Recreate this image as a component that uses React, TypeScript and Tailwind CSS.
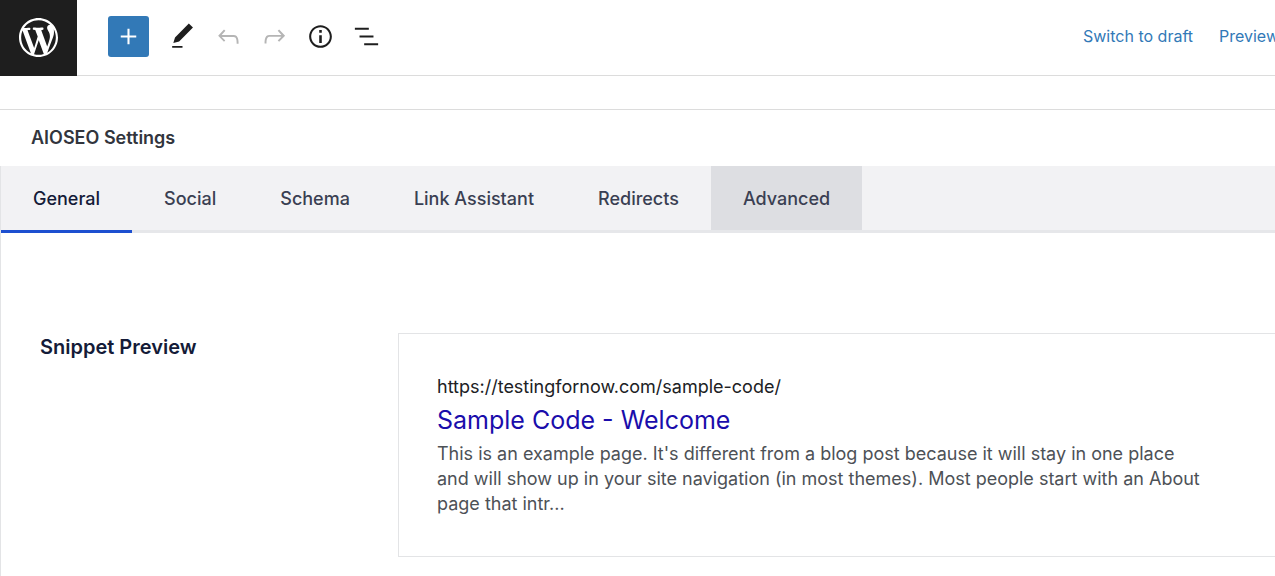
import type { ReactNode } from "react";

const tabs = ["General", "Social", "Schema", "Link Assistant", "Redirects", "Advanced"];

const icons = {
  wordpress:
    "M20 10c0-5.51-4.49-10-10-10C4.48 0 0 4.49 0 10c0 5.52 4.48 10 10 10 5.51 0 10-4.48 10-10zM7.78 15.37L4.37 6.22c.55-.02 1.17-.08 1.17-.08.5-.06.44-1.13-.06-1.11 0 0-1.45.11-2.37.11-.18 0-.37 0-.58-.01C4.12 2.69 6.87 1.11 10 1.11c2.33 0 4.45.87 6.05 2.34-.68-.11-1.65.39-1.65 1.58 0 .74.45 1.36.9 2.1.35.61.55 1.36.55 2.46 0 1.49-1.4 5-1.4 5l-3.03-8.37c.54-.02.82-.17.82-.17.5-.05.44-1.25-.06-1.22 0 0-1.44.12-2.38.12-.87 0-2.33-.12-2.33-.12-.5-.03-.56 1.2-.06 1.22l.92.08 1.26 3.41zM17.41 10c.24-.64.74-1.87.43-4.25.7 1.29 1.05 2.71 1.05 4.25 0 3.29-1.73 6.24-4.4 7.78.97-2.59 1.94-5.2 2.92-7.78zM6.1 18.09C3.12 16.65 1.11 13.53 1.11 10c0-1.3.23-2.48.72-3.59C3.25 10.3 4.67 14.2 6.1 18.09zm4.03-6.63l2.58 6.98c-.86.29-1.76.45-2.71.45-.79 0-1.57-.11-2.29-.33.81-2.38 1.62-4.74 2.42-7.1z",
  plus: "M18 11.2h-5.2V6h-1.6v5.2H6v1.6h5.2V18h1.6v-5.2H18z",
  edit: "M20.1 5.1L16.9 2 6.2 12.7l-1.3 4.4 4.5-1.3L20.1 5.1zM4 20.8h8v-1.5H4v1.5z",
  undo: "M18.3 11.7c-.6-.6-1.4-.9-2.3-.9H6.7l2.9-3.3-1.1-1-4.5 5L8.5 16l1-1-2.7-2.7H16c.5 0 .9.2 1.3.5 1 1 1 3.4 1 4.5v.3h1.5v-.2c0-1.5 0-4.3-1.5-5.7z",
  redo: "M15.6 6.5l-1.1 1 2.9 3.3H8c-.9 0-1.7.3-2.3.9-1.4 1.5-1.4 4.2-1.4 5.6v.2h1.5v-.3c0-1.1 0-3.5 1-4.5.3-.3.7-.5 1.3-.5h9.2L14.5 15l1.1 1.1 4.6-4.6-4.6-5z",
  info: "M12 3.2c-4.8 0-8.8 3.9-8.8 8.8 0 4.8 3.9 8.8 8.8 8.8 4.8 0 8.8-3.9 8.8-8.8 0-4.8-4-8.8-8.8-8.8zm0 16c-4 0-7.2-3.3-7.2-7.2C4.8 8 8 4.8 12 4.8s7.2 3.3 7.2 7.2c0 4-3.2 7.2-7.2 7.2zM11 17h2v-6h-2v6zm0-8h2V7h-2v2z",
  list: "M13.8 5.2H3v1.5h10.8V5.2zm-3.6 12v1.5H21v-1.5H10.2zm7.2-6H6.6v1.5h10.8v-1.5z",
};

function Icon({ path }: { path: string }) {
  return (
    <svg viewBox="0 0 24 24" className="size-[31px] fill-current" aria-hidden="true">
      <path d={path} />
    </svg>
  );
}

function ToolButton({
  label,
  disabled,
  children,
}: {
  label: string;
  disabled?: boolean;
  children: ReactNode;
}) {
  return (
    <button
      type="button"
      aria-label={label}
      disabled={disabled}
      className="flex h-[46px] w-[46px] items-center justify-center text-[#1e1e1e] disabled:text-[#b5b5b5]"
    >
      {children}
    </button>
  );
}

function EditorHeader() {
  return (
    <header className="flex h-[76px] overflow-hidden">
      <a
        href="#"
        aria-label="View Pages"
        className="flex w-[77px] shrink-0 items-center justify-center bg-[#1e1e1e] pb-[2px] text-white"
      >
        <svg viewBox="0 0 20 20" className="size-[39px] fill-current" aria-hidden="true">
          <path d={icons.wordpress} />
        </svg>
      </a>
      <div className="flex min-w-0 flex-1 items-center justify-between border-b border-[#dcdcdc] pb-[3px] pl-[31px]">
        <div className="flex items-center">
          <button
            type="button"
            aria-label="Add block"
            className="mr-[10px] flex size-[41px] items-center justify-center rounded-[3px] bg-[#3279b7] text-white"
          >
            <Icon path={icons.plus} />
          </button>
          <ToolButton label="Tools">
            <Icon path={icons.edit} />
          </ToolButton>
          <ToolButton label="Undo" disabled>
            <Icon path={icons.undo} />
          </ToolButton>
          <ToolButton label="Redo" disabled>
            <Icon path={icons.redo} />
          </ToolButton>
          <ToolButton label="Details">
            <Icon path={icons.info} />
          </ToolButton>
          <ToolButton label="List view">
            <Icon path={icons.list} />
          </ToolButton>
        </div>
        <div className="-mr-1 flex shrink-0 gap-[26px] text-[16px] text-[#3279b7]">
          <button type="button">Switch to draft</button>
          <button type="button">Preview</button>
        </div>
      </div>
    </header>
  );
}

function Tabs() {
  return (
    <div role="tablist" className="flex h-[67px] bg-[#f2f2f4] text-[18px] font-medium">
      {tabs.map((tab) => {
        let style = "border-[#e6e7ea] text-[#3a3f52]";
        if (tab === "General") style = "border-[#1d4fd0] text-[#141b38]";
        if (tab === "Advanced") style = "border-[#e6e7ea] bg-[#dddee2] bg-clip-padding text-[#3a3f52]";
        return (
          <button
            key={tab}
            type="button"
            role="tab"
            aria-selected={tab === "General"}
            className={`shrink-0 border-b-[3px] px-8 ${style}`}
          >
            {tab}
          </button>
        );
      })}
      <div className="flex-1 border-b-[3px] border-[#e6e7ea]" />
    </div>
  );
}

function SnippetPreview() {
  return (
    <section className="flex pt-[100px] pl-[39px]">
      <h3 className="w-[358px] shrink-0 text-[20px] leading-7 font-semibold text-[#141b38]">
        Snippet Preview
      </h3>
      <div className="flex-1 border border-r-0 border-[#e3e4e6] py-10 pl-[38px]">
        <p className="text-[18px] leading-[25px] text-[#202124]">
          https://testingfornow.com/sample-code/
        </p>
        <p className="py-[2px] text-[25px] leading-[38px] text-[#1a0dab]">Sample Code - Welcome</p>
        <p className="max-w-[770px] text-[18px] leading-[25px] text-[#4d5156]">
          This is an example page. It's different from a blog post because it will stay in one
          place and will show up in your site navigation (in most themes). Most people start with
          an About page that intr...
        </p>
      </div>
    </section>
  );
}

export default function App() {
  return (
    <main className="min-h-screen overflow-hidden bg-white font-['Inter',sans-serif]">
      <EditorHeader />
      <div className="mt-[33px] border-t border-[#dcdcdc]">
        <h2 className="px-[31px] py-4 text-[18px] leading-6 font-semibold text-[#32353d]">
          AIOSEO Settings
        </h2>
        <div className="min-h-[410px] border-l border-[#e3e4e6]">
          <Tabs />
          <SnippetPreview />
        </div>
      </div>
    </main>
  );
}
